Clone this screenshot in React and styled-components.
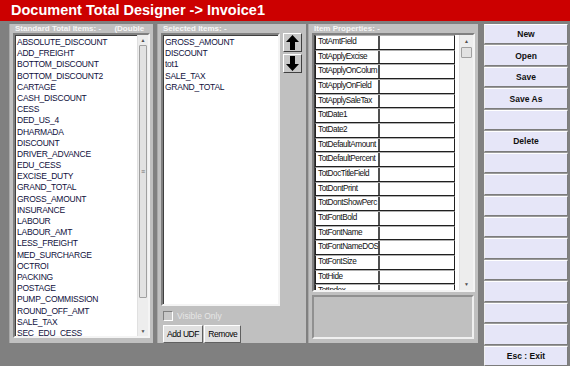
import React from "react";
import styled, { createGlobalStyle } from "styled-components";

const GlobalStyle = createGlobalStyle`
  html, body { margin: 0; padding: 0; }
  body {
    width: 570px;
    height: 366px;
    overflow: hidden;
    background: #808080;
    font-family: "Liberation Sans", Arial, sans-serif;
  }
  * { box-sizing: border-box; }
`;

const standardItems = [
  "ABSOLUTE_DISCOUNT", "ADD_FREIGHT", "BOTTOM_DISCOUNT", "BOTTOM_DISCOUNT2",
  "CARTAGE", "CASH_DISCOUNT", "CESS", "DED_US_4", "DHARMADA", "DISCOUNT",
  "DRIVER_ADVANCE", "EDU_CESS", "EXCISE_DUTY", "GRAND_TOTAL", "GROSS_AMOUNT",
  "INSURANCE", "LABOUR", "LABOUR_AMT", "LESS_FREIGHT", "MED_SURCHARGE",
  "OCTROI", "PACKING", "POSTAGE", "PUMP_COMMISSION", "ROUND_OFF_AMT",
  "SALE_TAX", "SEC_EDU_CESS",
];

const selectedItems = ["GROSS_AMOUNT", "DISCOUNT", "tot1", "SALE_TAX", "GRAND_TOTAL"];

const properties = [
  "TotAmtField", "TotApplyExcise", "TotApplyOnColum", "TotApplyOnField",
  "TotApplySaleTax", "TotDate1", "TotDate2", "TotDefaultAmount",
  "TotDefaultPercent", "TotDocTitleField", "TotDontPrint", "TotDontShowPerc",
  "TotFontBold", "TotFontName", "TotFontNameDOS", "TotFontSize", "TotHide",
  "TotIndex",
];

const sideButtons = [
  "New", "Open", "Save", "Save As", "", "Delete", "", "", "", "", "", "", "", "", "",
  "Esc : Exit",
];

const Window = styled.div`
  width: 570px;
  height: 366px;
  display: flex;
  flex-direction: column;
  background: #808080;
`;

const TitleBar = styled.div`
  height: 21px;
  background: #cc0000;
  color: #ffffff;
  font-weight: bold;
  font-size: 14.5px;
  padding-left: 11px;
  line-height: 20px;
  white-space: nowrap;
`;

const Body = styled.div`
  flex: 1;
  display: flex;
  align-items: flex-start;
  padding: 3px 2px 0 9px;
`;

const Panel = styled.div`
  width: ${({ $w }) => $w}px;
  height: 319px;
  margin-right: ${({ $mr }) => $mr || 0}px;
  background: #c0c0c0;
  border-left: 1px solid #a8a8a8;
  padding: 0 3px;
  display: flex;
  flex-direction: column;
  overflow: hidden;
`;

const Caption = styled.div`
  height: 9px;
  font-size: 8px;
  font-weight: bold;
  line-height: 9px;
  color: #f6f6f6;
  white-space: pre;
  padding-left: 2px;
`;

const Inset = styled.div`
  background: #ffffff;
  border-style: solid;
  border-width: 2px;
  border-color: #808080 #f4f4f4 #f4f4f4 #808080;
  box-shadow: inset 1px 1px 0 #404040;
  display: flex;
  overflow: hidden;
`;

const ListBox = styled(Inset)`
  height: ${({ $h }) => $h}px;
  width: ${({ $w }) => ($w ? `${$w}px` : "auto")};
`;

const ItemList = styled.div`
  flex: 1;
  padding: 2px 0 0 2px;
`;

const Item = styled.div`
  font-size: 8.5px;
  letter-spacing: -0.25px;
  line-height: 11.2px;
  height: 11.2px;
  color: #10103c;
  white-space: nowrap;
`;

const ScrollTrack = styled.div`
  width: ${({ $w }) => $w}px;
  background: #ededed;
  border-left: 1px solid #e0e0e0;
  display: flex;
  flex-direction: column;
  align-items: stretch;
`;

const ScrollArrow = styled.div`
  height: ${({ $h }) => $h}px;
  font-size: 5px;
  color: #505050;
  display: flex;
  align-items: center;
  justify-content: center;
`;

const Thumb = styled.div`
  height: ${({ $h }) => $h}px;
  margin: 0 1px;
  background: #e2e2e2;
  border: 1px solid #a0a0a0;
  border-radius: 1px;
  display: flex;
  align-items: center;
  justify-content: center;
  font-size: 7px;
  color: #707070;
`;

const ScrollFill = styled.div`
  flex: 1;
`;

const MiddleRow = styled.div`
  display: flex;
  gap: 3px;
`;

const ArrowColumn = styled.div`
  display: flex;
  flex-direction: column;
  gap: 2px;
`;

const ArrowButton = styled.div`
  width: 19px;
  height: 19px;
  background: #c8c8c8;
  border-style: solid;
  border-width: 1px;
  border-color: #ffffff #404040 #404040 #ffffff;
  display: flex;
  align-items: center;
  justify-content: center;
`;

const CheckRow = styled.div`
  display: flex;
  align-items: center;
  gap: 4px;
  height: 13px;
  margin-top: 3px;
  padding-left: 2px;
  font-size: 8.5px;
  color: #e6e6e6;
`;

const CheckBox = styled.div`
  width: 10px;
  height: 10px;
  background: #c8c8c8;
  border-style: solid;
  border-width: 1px;
  border-color: #808080 #ffffff #ffffff #808080;
`;

const SmallButtons = styled.div`
  display: flex;
  gap: 1px;
  margin-top: 3px;
  padding-left: 2px;
`;

const SmallButton = styled.div`
  height: 18px;
  padding: 0 3px;
  background: #e0e0e0;
  border-style: solid;
  border-width: 1px;
  border-color: #ffffff #606060 #606060 #ffffff;
  font-size: 8.5px;
  letter-spacing: -0.4px;
  line-height: 16px;
  color: #000;
`;

const Grid = styled.div`
  flex: 1;
  padding-left: 1px;
  border-right: 4px solid #ffffff;
`;

const GridRow = styled.div`
  display: flex;
  height: 14.67px;
  border-bottom: 1px solid #202020;
  border-top: 1px solid #b0b0b0;
  border-left: 1px solid #202020;
  border-right: 1px solid #202020;
`;

const NameCell = styled.div`
  width: 64px;
  border-right: 2px solid #505050;
  font-size: 8.2px;
  letter-spacing: -0.45px;
  line-height: 12.5px;
  padding-left: 2px;
  white-space: nowrap;
  overflow: hidden;
  color: #101010;
`;

const ValueCell = styled.div`
  flex: 1;
`;

const DescBox = styled.div`
  height: 44px;
  margin-top: 3px;
  margin-right: 1px;
  background: #c0c0c0;
  border-style: solid;
  border-width: 2px;
  border-color: #909090 #f0f0f0 #f0f0f0 #909090;
`;

const ButtonColumn = styled.div`
  width: 84px;
  height: 342px;
  margin-left: 6px;
  display: flex;
  flex-direction: column;
  background: #9a9a9a;
  gap: 1px;
`;

const SideButton = styled.div`
  flex: 1;
  background: #e6e6f8;
  border-style: solid;
  border-width: 1px;
  border-color: #ffffff #7c7c7c #7c7c7c #f0f0f0;
  font-size: 8.5px;
  font-weight: bold;
  color: #101010;
  display: flex;
  align-items: center;
  justify-content: center;
`;

const Arrow = ({ down }) => (
  <svg width="15" height="17" viewBox="0 0 15 17">
    <polygon
      points="7.5,1 14,8 10,8 10,16 5,16 5,8 1,8"
      fill="#000"
      transform={down ? "rotate(180 7.5 8.5)" : undefined}
    />
  </svg>
);

export default function App() {
  return (
    <>
      <GlobalStyle />
      <Window>
        <TitleBar>Document Total Designer -&gt; Invoice1</TitleBar>
        <Body>
          <Panel $w={144} $mr={4}>
            <Caption>{"Standard Total Items: -      (Double"}</Caption>
            <ListBox $h={305}>
              <ItemList>
                {standardItems.map((s) => (
                  <Item key={s}>{s}</Item>
                ))}
              </ItemList>
              <ScrollTrack $w={11}>
                <ScrollArrow $h={10}>▲</ScrollArrow>
                <Thumb $h={253}>≡</Thumb>
                <ScrollFill />
                <ScrollArrow $h={10}>▼</ScrollArrow>
              </ScrollTrack>
            </ListBox>
          </Panel>

          <Panel $w={149} $mr={2}>
            <Caption>Selected Items: -</Caption>
            <MiddleRow>
              <ListBox $h={273} $w={119}>
                <ItemList>
                  {selectedItems.map((s) => (
                    <Item key={s}>{s}</Item>
                  ))}
                </ItemList>
              </ListBox>
              <ArrowColumn>
                <ArrowButton>
                  <Arrow />
                </ArrowButton>
                <ArrowButton>
                  <Arrow down />
                </ArrowButton>
              </ArrowColumn>
            </MiddleRow>
            <CheckRow>
              <CheckBox />
              Visible Only
            </CheckRow>
            <SmallButtons>
              <SmallButton>Add UDF</SmallButton>
              <SmallButton>Remove</SmallButton>
            </SmallButtons>
          </Panel>

          <Panel $w={170}>
            <Caption>Item Properties: -</Caption>
            <ListBox $h={259}>
              <Grid>
                {properties.map((p) => (
                  <GridRow key={p}>
                    <NameCell>{p}</NameCell>
                    <ValueCell />
                  </GridRow>
                ))}
              </Grid>
              <ScrollTrack $w={14}>
                <ScrollArrow $h={12}>▲</ScrollArrow>
                <Thumb $h={11} />
                <ScrollFill />
                <ScrollArrow $h={12}>▼</ScrollArrow>
              </ScrollTrack>
            </ListBox>
            <DescBox />
          </Panel>

          <ButtonColumn>
            {sideButtons.map((b, i) => (
              <SideButton key={i}>{b}</SideButton>
            ))}
          </ButtonColumn>
        </Body>
      </Window>
    </>
  );
}
